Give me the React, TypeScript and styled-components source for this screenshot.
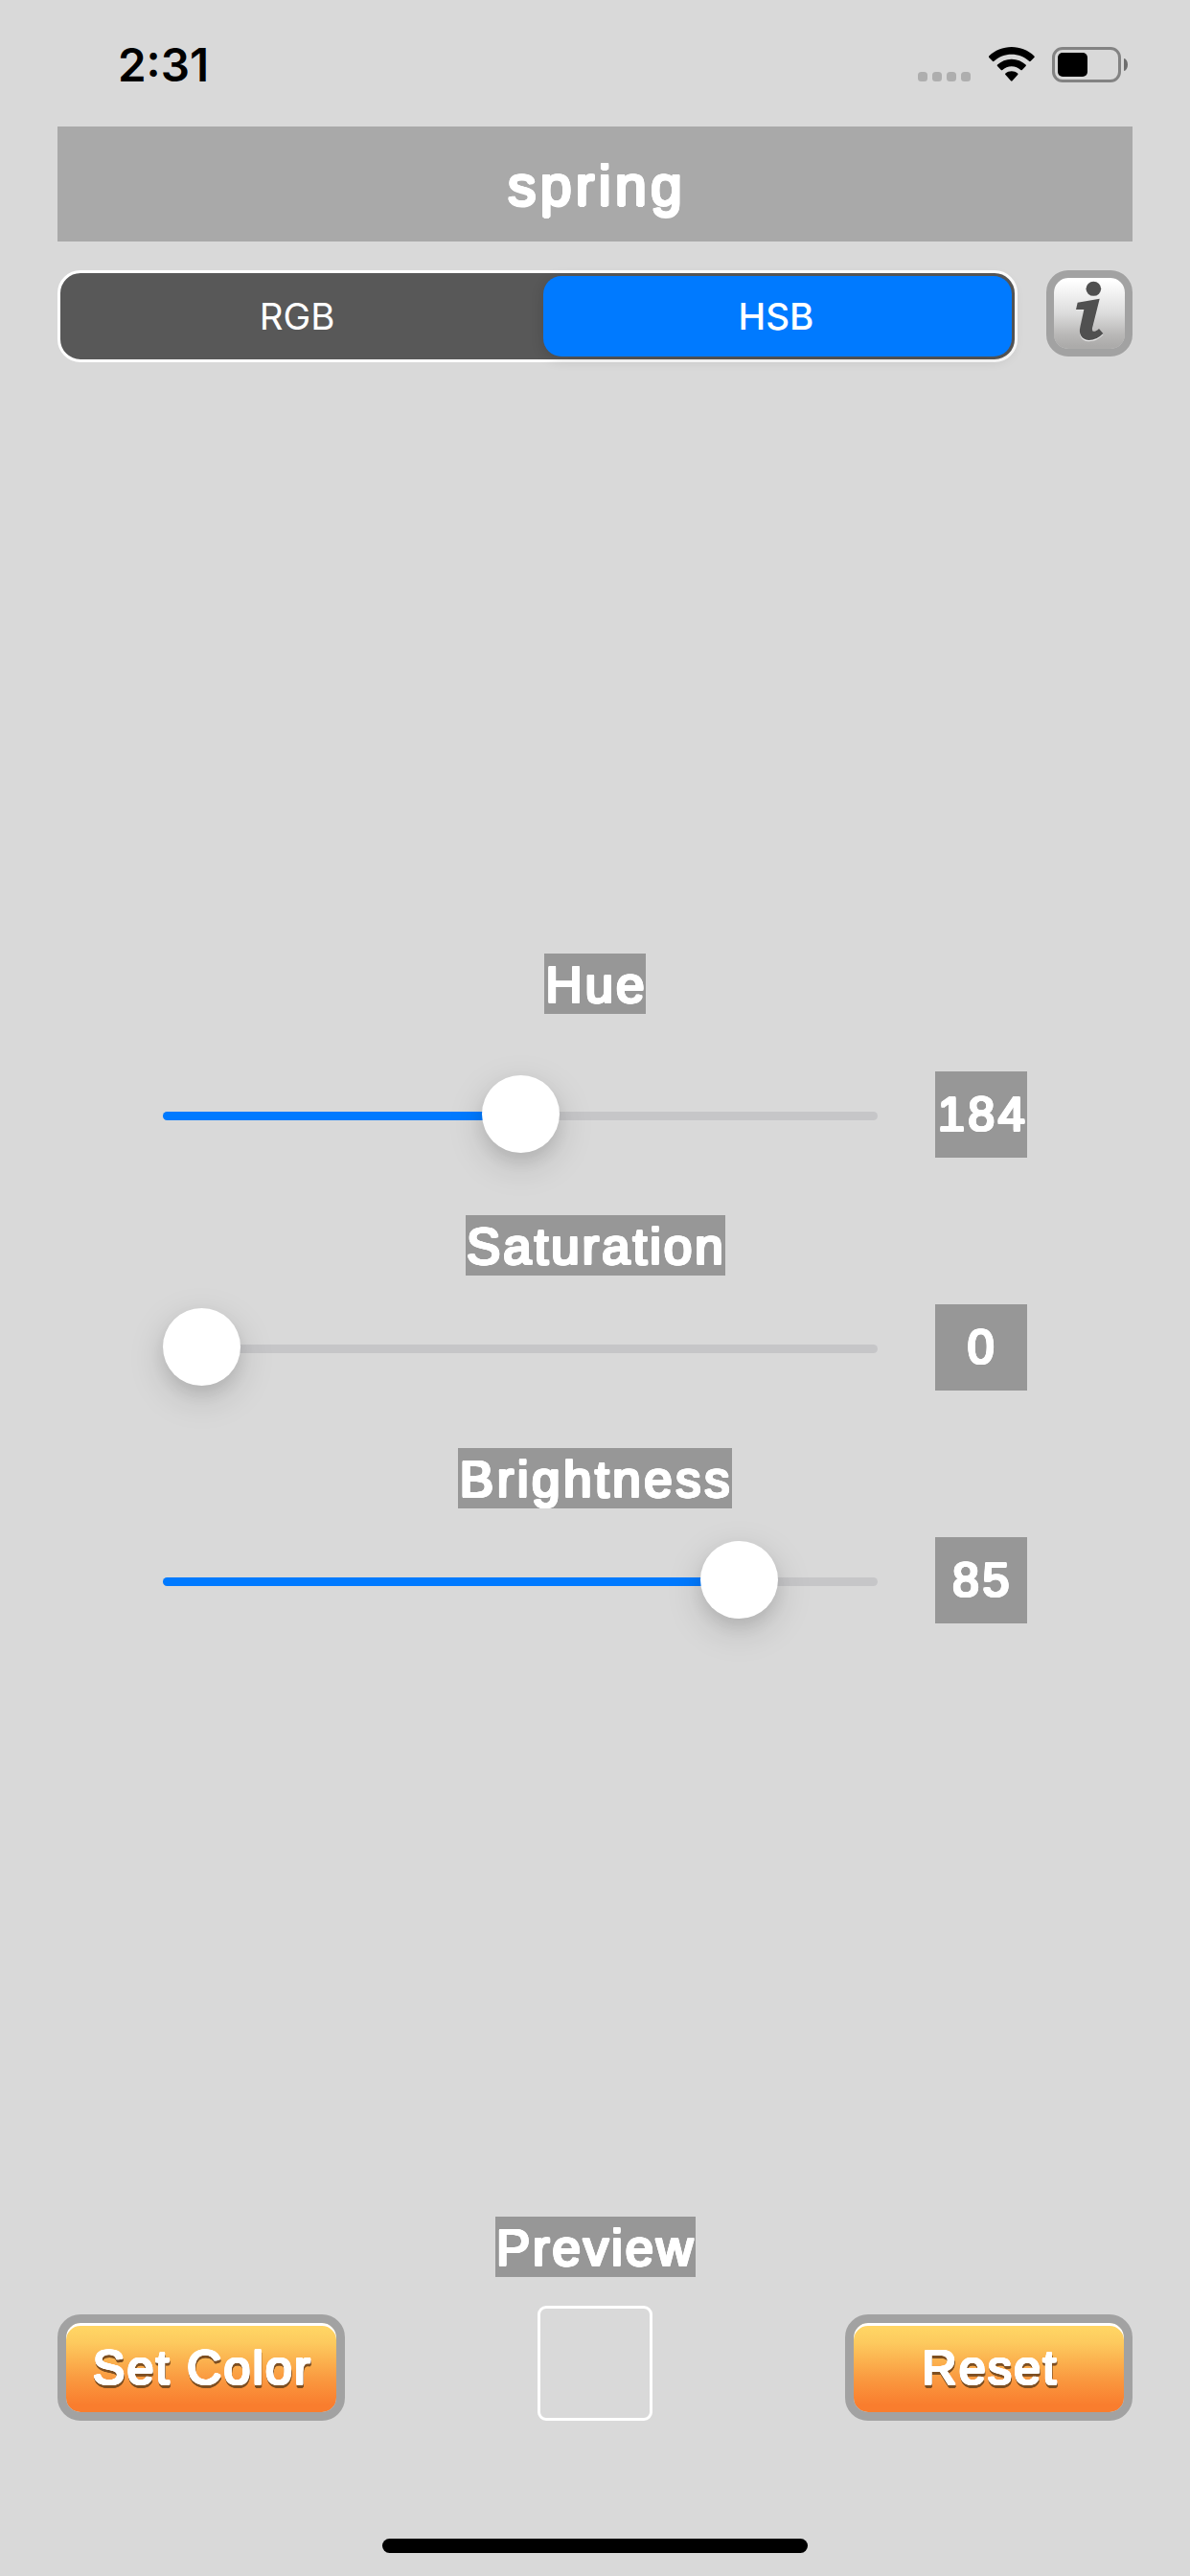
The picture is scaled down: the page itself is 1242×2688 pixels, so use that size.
import React from "react";
import styled, { createGlobalStyle } from "styled-components";

const ROUNDED = `"Arial Rounded MT Bold", "Liberation Sans", Arial, sans-serif`;
const SYSTEM = `Inter, "Liberation Sans", sans-serif`;

/* Thickens a face evenly in all directions, which rounds its stroke ends. */
const ring = (radius: number, color: string, dx = 0, dy = 0) =>
  Array.from({ length: 12 }, (_, i) => {
    const a = (i * Math.PI) / 6;
    return `${(dx + Math.cos(a) * radius).toFixed(2)}px ${(dy + Math.sin(a) * radius).toFixed(2)}px 0 ${color}`;
  }).join(", ");

const GlobalStyle = createGlobalStyle`
  *, *::before, *::after { box-sizing: border-box; }
  body { margin: 0; background: #d9d9d9; }
  button { margin: 0; padding: 0; font: inherit; color: inherit; }
`;

const Screen = styled.main`
  width: 1242px;
  height: 2688px;
  padding: 0 60px 24px;
  display: flex;
  flex-direction: column;
  background: #d9d9d9;
  overflow: hidden;
`;

const StatusBar = styled.header`
  height: 132px;
  flex: none;
  padding: 49px 5px 0 63px;
  display: flex;
  align-items: flex-start;
`;

const Clock = styled.time`
  flex: 1;
  margin-top: -1px;
  font: 600 47.5px/40px ${SYSTEM};
  letter-spacing: 0;
  color: #000;
`;

const SignalDots = styled.div`
  display: flex;
  gap: 5px;
  margin: 26px 19px 0 0;
`;

const Dot = styled.i`
  width: 10px;
  height: 10px;
  border-radius: 3.5px;
  background: #aeaeae;
`;

const Wifi = styled.svg`
  width: 48px;
  height: 37px;
  margin-right: 18px;
`;

const Battery = styled.div`
  width: 72px;
  height: 37px;
  padding: 3px;
  border: 3px solid #838383;
  border-radius: 11px;
`;

const BatteryLevel = styled.div`
  width: 31px;
  height: 25px;
  border-radius: 5px;
  background: #000;
`;

const BatteryCap = styled.div`
  width: 4px;
  height: 13px;
  margin: 12px 0 0 3px;
  border-radius: 0 4px 4px 0 / 0 6.5px 6.5px 0;
  background: #6e6e6e;
`;

const Title = styled.h1`
  height: 120px;
  flex: none;
  margin: 0 0 30px;
  padding: 3px 0 0 4px;
  background: #a9a9a9;
  color: #fff;
  font: 400 59px/118px ${ROUNDED};
  letter-spacing: 4.2px;
  text-align: center;
  text-shadow: ${ring(1.5, "#fff")};
`;

const ModeRow = styled.div`
  display: flex;
  gap: 30px;
  align-items: flex-start;
`;

const Segments = styled.div`
  width: 1002px;
  height: 96px;
  padding: 3px;
  display: grid;
  grid-template-columns: 1fr 489px;
  border: 3px solid #fff;
  border-radius: 24px;
  background: #585858;
`;

const Segment = styled.button<{ $active?: boolean }>`
  border: 0;
  border-radius: 19px;
  padding-right: ${(p) => (p.$active ? "3px" : "13px")};
  background: ${(p) => (p.$active ? "#007aff" : "transparent")};
  box-shadow: ${(p) => (p.$active ? "0 3px 14px rgba(0, 0, 0, 0.14)" : "none")};
  color: #fff;
  font: ${(p) => (p.$active ? 500 : 400)} 38.5px/84px ${SYSTEM};
`;

const InfoButton = styled.button`
  width: 90px;
  height: 90px;
  display: flex;
  border: 8px solid #a2a2a2;
  border-radius: 23px;
  background: linear-gradient(#fff 4%, #f3f3f3 20%, #dcdcdc 50%, #b9b8b7 80%, #acabaa 96%) padding-box;
`;

const InfoIcon = styled.svg`
  width: 74px;
  height: 74px;
`;

const Controls = styled.section`
  margin-top: 617px;
  display: flex;
  flex-direction: column;
`;

const Label = styled.div<{ $width: number; $spacing: number }>`
  width: ${(p) => p.$width}px;
  height: 63px;
  flex: none;
  background: #979797;
  color: #fff;
  font: 400 53px/65px ${ROUNDED};
  letter-spacing: ${(p) => p.$spacing}px;
  text-indent: ${(p) => p.$spacing / 2}px;
  white-space: nowrap;
  text-shadow: ${ring(1.4, "#fff")};
`;

const Control = styled.div<{ $gap: number }>`
  display: flex;
  flex-direction: column;
  align-items: center;
  gap: ${(p) => p.$gap}px;
  margin-bottom: 60px;
`;

const SliderRow = styled.div`
  width: 902px;
  height: 90px;
  display: flex;
  justify-content: space-between;
`;

const Slider = styled.div`
  position: relative;
  width: 746px;
  padding-top: 42px;
`;

const Track = styled.div`
  height: 9px;
  border-radius: 5px;
  background: #c6c6c8;
  overflow: hidden;
`;

const Fill = styled.div`
  height: 100%;
  background: #007aff;
`;

const Thumb = styled.div`
  position: absolute;
  top: 4px;
  width: 81px;
  height: 81px;
  border-radius: 50%;
  background: #fff;
  box-shadow: 0 12px 38px rgba(0, 0, 0, 0.15), 0 8px 16px rgba(0, 0, 0, 0.08);
`;

const Value = styled.output`
  width: 96px;
  height: 90px;
  padding-left: 3px;
  background: #979797;
  color: #fff;
  font: 400 50px/90px ${ROUNDED};
  letter-spacing: 3.6px;
  text-align: center;
  white-space: nowrap;
  text-shadow: ${ring(1.4, "#fff")};
`;

const Footer = styled.footer`
  margin-top: auto;
  display: flex;
  flex-direction: column;
  align-items: center;
`;

const Actions = styled.div`
  width: 100%;
  margin: 30px 0 123px;
  display: flex;
  justify-content: space-between;
  align-items: flex-end;
`;

const ActionButton = styled.button`
  width: 300px;
  height: 111px;
  padding: 1px 0 0 3px;
  border: 9px solid #a2a2a2;
  border-radius: 24px;
  background: linear-gradient(#ffd564 6%, #fdca5e 22%, #fa9a40 62%, #f97d2e 92%) padding-box;
  box-shadow: inset 0 3px 0 #fff;
  color: #fff;
  font: 400 50px/92px ${ROUNDED};
  letter-spacing: 2.3px;
  text-align: center;
  white-space: nowrap;
  text-shadow: ${ring(1.35, "#fff")}, ${ring(1.35, "#7d4f22", 0.5, 2.8)};
`;

const Swatch = styled.div`
  width: 120px;
  height: 120px;
  border: 3px solid #fff;
  border-radius: 9px;
  background: #d9d9d9;
`;

const HomeIndicator = styled.div`
  width: 444px;
  height: 15px;
  border-radius: 8px;
  background: #000;
`;

const channels = [
  { name: "Hue", width: 106, spacing: 2.9, gap: 60, value: 184, position: 0.5008 },
  { name: "Saturation", width: 271, spacing: 2.9, gap: 30, value: 0, position: 0 },
  { name: "Brightness", width: 286, spacing: 3.5, gap: 30, value: 85, position: 0.8436 },
];

const THUMB_TRAVEL = 746 - 81;

export default function App() {
  return (
    <>
      <GlobalStyle />
      <Screen>
        <StatusBar>
          <Clock>2:31</Clock>
          <SignalDots>
            <Dot />
            <Dot />
            <Dot />
            <Dot />
          </SignalDots>
          <Wifi viewBox="0 0 48 37" fill="#000">
            <path d="M23.8 0C32.8 0 41.2 3.5 47.4 9.5c.5.5.5 1.1 0 1.6l-3.7 3.7c-.5.5-1.1.5-1.6 0C37.1 10.2 30.7 7.7 23.8 7.7S10.5 10.2 5.5 14.8c-.5.5-1.1.5-1.6 0L.2 11.1c-.5-.5-.5-1.1 0-1.6C6.4 3.5 14.800 0 23.800 0Z" />
            <path d="M23.8 12.7c5.700 0 10.900 2.200 14.800 5.800.5.500.5 1.100 0 1.600l-3.800 3.800c-.4.500-1 .5-1.500.1-2.500-2.300-5.800-3.700-9.500-3.700s-7 1.400-9.500 3.700c-.5.400-1.100.4-1.500-.1L9 20.100c-.5-.5-.5-1.100 0-1.600 3.900-3.600 9.100-5.800 14.800-5.800Z" />
            <path d="M23.8 25.3c2.400 0 4.500.8 6.300 2.200.5.400.5 1.100.1 1.600l-5.600 6.200c-.5.600-1.100.6-1.600 0l-5.600-6.200c-.4-.5-.4-1.200.1-1.600 1.800-1.400 3.900-2.200 6.300-2.200Z" />
          </Wifi>
          <Battery>
            <BatteryLevel />
          </Battery>
          <BatteryCap />
        </StatusBar>

        <Title>spring</Title>

        <ModeRow>
          <Segments>
            <Segment>RGB</Segment>
            <Segment $active>HSB</Segment>
          </Segments>
          <InfoButton aria-label="Info">
            <InfoIcon viewBox="300 90 222 222">
              <g fill="#e8e8e8" transform="translate(0 4)">
                <path d="M374 167 443 155 420 248C418 262 431 259 441 249L454 264Q434 285 409 285C386 283 377 266 382 244L394 189H369Z" />
              </g>
              <g fill="#505050">
                <ellipse cx="424" cy="124" rx="23.5" ry="22.5" />
                <path d="M374 167 443 155 420 248C418 262 431 259 441 249L454 264Q434 285 409 285C386 283 377 266 382 244L394 189H369Z" />
              </g>
            </InfoIcon>
          </InfoButton>
        </ModeRow>

        <Controls>
          {channels.map((c) => (
            <Control key={c.name} $gap={c.gap}>
              <Label $width={c.width} $spacing={c.spacing}>
                {c.name}
              </Label>
              <SliderRow>
                <Slider>
                  <Track>
                    <Fill style={{ width: c.position ? c.position * THUMB_TRAVEL + 40 : 0 }} />
                  </Track>
                  <Thumb style={{ left: c.position * THUMB_TRAVEL }} />
                </Slider>
                <Value>{c.value}</Value>
              </SliderRow>
            </Control>
          ))}
        </Controls>

        <Footer>
          <Label $width={209} $spacing={2.8}>
            Preview
          </Label>
          <Actions>
            <ActionButton>Set Color</ActionButton>
            <Swatch />
            <ActionButton>Reset</ActionButton>
          </Actions>
          <HomeIndicator />
        </Footer>
      </Screen>
    </>
  );
}
